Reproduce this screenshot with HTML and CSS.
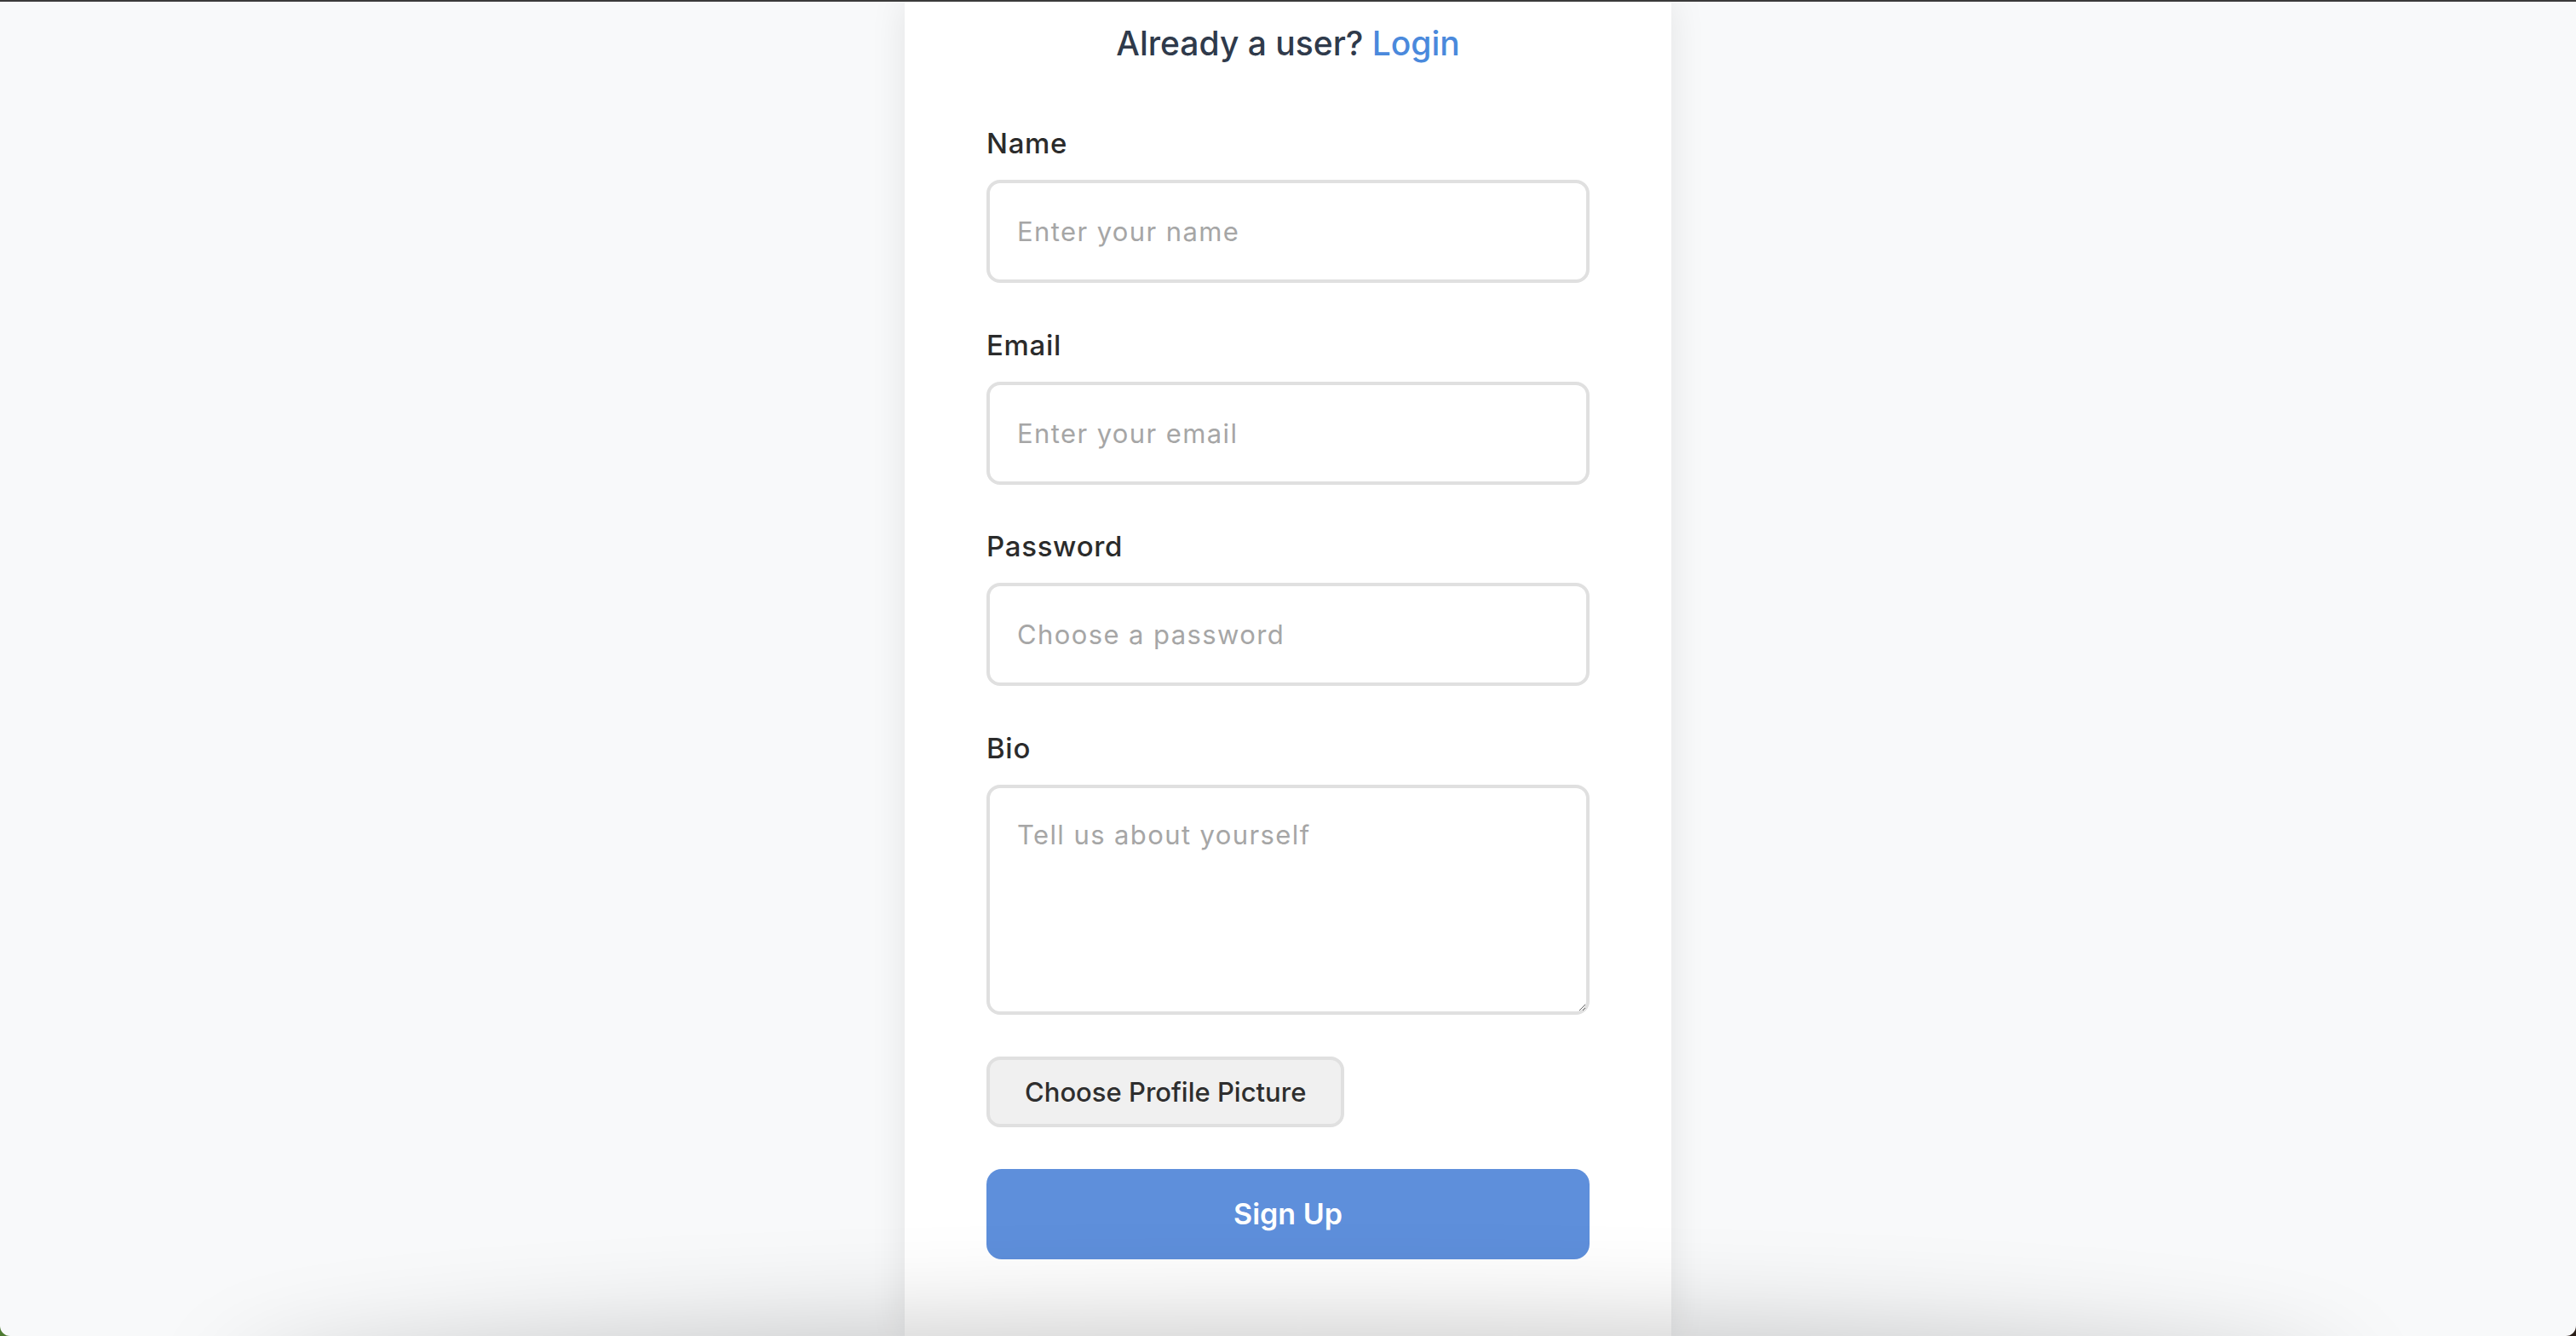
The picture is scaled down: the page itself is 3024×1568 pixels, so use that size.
FILE: index.html
```html
<!DOCTYPE html>
<html lang="en">
<head>
<meta charset="utf-8">
<title>Sign Up</title>
<link rel="stylesheet" href="styles.css">
</head>
<body>
<div class="window">
  <main class="card">
    <h2 class="switch">Already a user? <a href="#" class="switch-link">Login</a></h2>
    <form class="form">
      <div class="field">
        <label class="label" for="name">Name</label>
        <input class="input" id="name" type="text" placeholder="Enter your name">
      </div>
      <div class="field">
        <label class="label" for="email">Email</label>
        <input class="input" id="email" type="email" placeholder="Enter your email">
      </div>
      <div class="field">
        <label class="label" for="password">Password</label>
        <input class="input" id="password" type="password" placeholder="Choose a password">
      </div>
      <div class="field field-bio">
        <label class="label" for="bio">Bio</label>
        <textarea class="input textarea" id="bio" placeholder="Tell us about yourself"></textarea>
      </div>
      <div class="file-row">
        <label class="file-btn" for="pic">Choose Profile Picture</label>
        <input class="file-input" id="pic" type="file">
      </div>
      <button class="submit" type="button">Sign Up</button>
    </form>
  </main>
  <div class="bottom-shade"></div>
</div>
</body>
</html>
```

FILE: styles.css
```css
html {
  background: linear-gradient(to right, #4d7a32 50%, #2a1e18 50%);
}
body {
  margin: 0;
}
.window {
  position: relative;
  box-sizing: border-box;
  height: 1568px;
  border-top: 2px solid #3a3a3a;
  background: #f8f9fa;
  border-radius: 0 0 12px 12px;
  overflow: hidden;
  font-family: Inter, "Liberation Sans", sans-serif;
}
.card {
  box-sizing: border-box;
  width: 900px;
  min-height: 100%;
  margin: 0 auto;
  padding: 25px 96px 0;
  background: #ffffff;
  box-shadow: 0 0 40px rgba(0, 0, 0, 0.09);
}
.switch {
  margin: 0;
  font-size: 39px;
  line-height: 48px;
  font-weight: 500;
  text-align: center;
  color: #2f3a4b;
}
.switch-link {
  color: #4a89dc;
  text-decoration: none;
}
.form {
  margin-top: 73px;
  display: flex;
  flex-direction: column;
}
.field {
  display: flex;
  flex-direction: column;
  margin-bottom: 52.5px;
}
.field-bio {
  margin-bottom: 49px;
}
.label {
  font-size: 33px;
  line-height: 40px;
  font-weight: 500;
  color: #2b2b2b;
  letter-spacing: 0.7px;
  margin-bottom: 23px;
}
.input {
  box-sizing: border-box;
  width: 708px;
  height: 121px;
  padding: 0 32px;
  border: 4px solid #e0e0e0;
  border-radius: 16px;
  background: #ffffff;
  font-family: Inter, "Liberation Sans", sans-serif;
  font-size: 31px;
  color: #333;
  letter-spacing: 1.4px;
  outline: none;
}
.input::placeholder {
  color: #a6a6a6;
}
.textarea {
  height: 270px;
  padding: 35px 32px 20px;
  line-height: 40px;
  resize: vertical;
}
.file-row {
  display: flex;
}
.file-btn {
  box-sizing: border-box;
  height: 83px;
  padding: 0 41px;
  display: flex;
  align-items: center;
  border: 4px solid #e0e0e0;
  border-radius: 16px;
  background: #f0f0f0;
  font-size: 31px;
  font-weight: 500;
  color: #2e2e2e;
}
.file-input {
  display: none;
}
.submit {
  box-sizing: border-box;
  width: 708px;
  height: 106px;
  margin-top: 49px;
  border: none;
  border-radius: 18px;
  background: #5e8fdb;
  color: #ffffff;
  font-family: Inter, "Liberation Sans", sans-serif;
  font-size: 34px;
  font-weight: 600;
}
.bottom-shade {
  position: absolute;
  left: 280px;
  right: 280px;
  bottom: -140px;
  height: 140px;
  border-radius: 50%;
  box-shadow: 0 0 120px 12px rgba(0, 0, 0, 0.22);
}
```
